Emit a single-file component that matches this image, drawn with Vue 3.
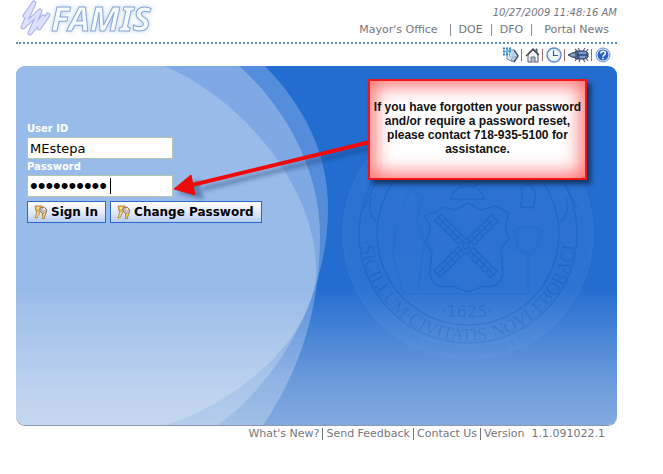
<script setup>
import { ref } from 'vue'

const userId = ref('MEstepa')
const password = ref('famis12345')
const siteLinks = ["Mayor's Office", 'DOE', 'DFO', 'Portal News']
const footerLinks = ["What's New?", 'Send Feedback', 'Contact Us']
const rim = 'M361 234a107 107 0 0 0 214 0'
const scribble = 'M9 16 18 3 7 27 24 11 14 33 27 17 23 28 32 15'
</script>

<template>
  <div class="page">
    <header class="top">
      <svg class="logo" viewBox="0 0 140 40" role="img" aria-label="FAMIS">
        <path class="scribble" :d="scribble" />
        <path class="scribble core" :d="scribble" />
        <text class="word" x="35" y="31">FAMIS</text>
      </svg>
      <div class="meta">
        <time class="clock">10/27/2009 11:48:16 AM</time>
        <nav class="links">
          <a v-for="l in siteLinks" :key="l" href="#">{{ l }}</a>
        </nav>
      </div>
    </header>

    <nav class="tools">
      <a href="#" aria-label="Notes">
        <svg width="16" height="16" viewBox="0 0 16 16">
          <path d="M4 3h7l4 6-4 6-7-3z" fill="#dceaf6" stroke="#6d8fb4" />
          <path d="M8 6h3M8 8h4M6 10h5" stroke="#9db8d6" />
          <path d="M11 3l4 6-4 6" fill="none" stroke="#3d5878" stroke-width="1.500" />
          <path d="M8 14l1-3 3-2 1 2-3 3z" fill="#c0d2e0" stroke="#7690aa" stroke-width=".8" />
          <path d="M0 1.500h8M0 4.500h8M0 7.500h7" stroke="#2a86c8" stroke-width="2" stroke-dasharray="2 1" />
          <path d="M2 4.500h4M4 3v3" stroke="#5cb4e6" stroke-width="1" />
        </svg>
      </a>
      <a href="#" aria-label="Home">
        <svg width="15" height="16" viewBox="0 0 15 16">
          <path d="M3 8v7h10V8L8 3z" fill="#f1f3f6" stroke="#565d66" />
          <path d="M11 4V2h1v4" fill="#a8b0ba" stroke="#4b525b" />
          <path d="M1 9l7-7 6 6" fill="none" stroke="#4a4f57" stroke-width="1.400" />
          <path d="M6 15v-5h4v5" fill="#aab7c9" stroke="#6b7585" />
        </svg>
      </a>
      <a href="#" aria-label="Time">
        <svg width="16" height="16" viewBox="0 0 16 16">
          <circle cx="8" cy="8" r="7" fill="#f6faff" stroke="#5f88c8" stroke-width="1.400" />
          <circle cx="8" cy="8" r="5.500" fill="none" stroke="#d5e3f7" />
          <path d="M7.500 3.500v5H12" fill="none" stroke="#315b9d" stroke-width="1.200" />
        </svg>
      </a>
      <a href="#" aria-label="Report a bug">
        <svg width="21" height="16" viewBox="0 0 21 16">
          <path d="M9 4 7 2M12 4l-2-3M15 4l2-3M18 5l2-3M9 11l-2 3M12 12l-1 3M15 12l2 3M18 11l2 3" stroke="#555f74" stroke-width="1.200" />
          <path d="M8 4h9l3 2v4l-3 2H8l-2-2V6z" fill="#5675ad" stroke="#33456a" />
          <path d="M10 4v8M9 8h11" stroke="#2c426e" />
          <path d="M11 6h7M12 10h5" stroke="#90abd9" stroke-width="1.500" />
          <path d="M8 5 4 6 0 8l4 2 4 1z" fill="#62809f" stroke="#3a4d66" />
          <path d="M3 8h4" stroke="#b7cbe0" />
        </svg>
      </a>
      <a href="#" aria-label="Help">
        <svg width="16" height="16" viewBox="0 0 16 16">
          <circle cx="8" cy="8" r="7" fill="#e3edfc" stroke="#6b91d3" />
          <circle cx="8" cy="8" r="5.500" fill="#2a62c4" />
          <path d="M5.800 6.500c0-3 4.600-3 4.600-.3C10.400 8 8 7.800 8 9.700M8 10.700v1.600" fill="none" stroke="#fff" stroke-width="1.600" />
        </svg>
      </a>
    </nav>

    <main class="panel">
      <svg class="backdrop" viewBox="16 66 601 359" preserveAspectRatio="none" aria-hidden="true">
        <defs>
          <linearGradient id="base" x1="0" y1="0" x2="0" y2="1">
            <stop offset="0" stop-color="#236dd1" />
            <stop offset=".62" stop-color="#236dd0" />
            <stop offset=".7" stop-color="#3b7cd4" />
            <stop offset=".88" stop-color="#6c9bdb" />
            <stop offset="1" stop-color="#82aadf" />
          </linearGradient>
          <path id="rim" :d="rim" />
        </defs>
        <path d="M16 66h601v359H16z" fill="url(#base)" />
        <g fill="#fff">
          <path d="M16 66H265C303 105 328 152 328 208C328 290 285 375 218 425H16z" opacity=".22" />
          <path d="M16 66H239C290 111 320 175 320 236C320 308 300 371 263 425H16z" opacity=".25" />
          <path d="M16 66H165C245 101 316 188 316 270C316 335 240 402 165 425H16z" opacity=".21" />
        </g>
        <g class="seal">
          <circle cx="468" cy="234" r="125" class="disc" />
          <circle cx="468" cy="234" r="117" class="beads" />
          <circle cx="468" cy="234" r="109" />
          <circle cx="468" cy="234" r="91" />
          <path d="M430 213q9 0 12-6l13 3 13-7 13 7 14-4 14 7q-6 16 0 25l-8 11 2 25q-5 16-19 12l-16 6-16-6q-21 4-22-14l2-20-7-10q10-15-1-25z" />
          <g v-for="a in [45, 135, 225, 315]" :key="a" :transform="`rotate(${a} 466 246)`">
            <path d="M462 206h9v34h-9zM466.500 206v34M462 213h9M462 220h9M462 227h9M462 234h9" />
          </g>
          <circle cx="466" cy="246" r="3" />
          <path d="M451 199q1-11 17-13 14 2 16 13zM458 186q10-10 19 0M520 207q4-9 1-20l9-3 6 9-3 15z" />
          <path class="faint" d="M515 230q14-7 26 0l-4 17-9 7-10-6zM528 254v38M402 205l9-16 11 9-5 23 7 19-6 52M396 222l-3 34 10 37M402 294h128" />
          <path d="M364 209q7-20 15-31M577 209q-8-20-17-31M378 222q-11-4-7-25M559 222q11-4 7-25" />
          <text class="legend"><textPath href="#rim" startOffset="50%">·SIGILLUM·CIVITATIS·NOVI·EBORACI·</textPath></text>
          <text class="year" x="467" y="317">·1625·</text>
        </g>
      </svg>

      <form class="login" @submit.prevent>
        <label for="user">User ID</label>
        <input id="user" v-model="userId" type="text" autocomplete="off" />
        <label for="pass">Password</label>
        <div class="secret">
          <input id="pass" v-model="password" type="password" autocomplete="off" />
          <span class="caret"></span>
        </div>
        <div class="actions">
          <button v-for="b in ['Sign In', 'Change Password']" :key="b" type="button">
            <svg width="15" height="16" viewBox="0 0 15 16" aria-hidden="true">
              <path d="M2 2h7l1 3-3 3-4-1z" fill="#e6b55b" stroke="#bd8a3c" />
              <path d="M4 7 2 14h2l3-6" fill="#f0d490" stroke="#b8924f" />
              <path d="M7 4l4-1 3 3-1 3-3 1-3-3z" fill="#c4bdb3" stroke="#8d7c70" />
              <path d="M11 9l-2 2 1 1-1 2 2 1 2-6" fill="#f4ce76" stroke="#a98449" />
              <path d="M4 4h2M10 5h2" stroke="#fff4d2" stroke-width="1.500" />
            </svg>
            {{ b }}
          </button>
        </div>
      </form>

      <svg class="arrow" width="200" height="64" viewBox="0 0 200 64" aria-hidden="true">
        <g class="shadow"><path d="M200 9 30 51" /><path class="head" d="M5 55 25 42 30 61z" /></g>
        <g class="ink"><path d="M197 4 15 48" /><path class="head" d="M1 51 18 37 22 57z" /></g>
      </svg>
      <aside class="callout">
        <p>If you have forgotten your password<br />and/or require a password reset,<br />please contact 718-935-5100 for<br />assistance.</p>
      </aside>
    </main>

    <footer class="foot">
      <a v-for="l in footerLinks" :key="l" href="#">{{ l }}</a>
      <span>Version&nbsp; 1.1.091022.1</span>
    </footer>
  </div>
</template>

<style>
body {
  margin: 0;
  background: #fff;
}
</style>

<style scoped>
.page {
  padding: 0 46px 0 16px;
  font-family: "DejaVu Sans", Verdana, sans-serif;
  font-size: 11px;
  color: #74767c;
}
a {
  color: inherit;
  text-decoration: none;
}
.top {
  display: flex;
  justify-content: space-between;
  height: 42px;
  border-bottom: 2px dotted #5c8cae;
}
.logo {
  width: 140px;
  height: 40px;
  overflow: visible;
}
.word {
  font: italic bold 34px "Noto Sans", sans-serif;
  fill: #f7fcff;
  stroke: #8ba8da;
  stroke-width: 1;
  filter: drop-shadow(0 0 2px #b9d0f2);
}
.scribble {
  fill: none;
  stroke: #a9aff0;
  stroke-width: 5;
  stroke-linecap: round;
  stroke-linejoin: round;
}
.scribble.core {
  stroke: #dde1fd;
  stroke-width: 3;
}
.meta {
  display: flex;
  flex-direction: column;
  align-items: flex-end;
  gap: 4px;
  padding-top: 6px;
}
.clock {
  font-size: 10px;
  font-style: italic;
  line-height: 14px;
}
.links {
  display: flex;
  padding-right: 8px;
  line-height: 12px;
}
.links a {
  padding: 0 8px;
  border-left: 1px solid #8d8f94;
}
.links a:first-child {
  padding-right: 12px;
  border-left: 0;
}
.links a:last-child {
  padding: 0 0 0 12px;
}
.tools {
  display: flex;
  justify-content: flex-end;
  align-items: center;
  height: 22px;
  padding-right: 4px;
}
.tools a {
  display: flex;
  align-items: center;
  height: 12px;
  padding: 0 2px 0 3px;
  border-left: 1px solid #966b6b;
}
.tools a:first-child {
  border-left: 0;
}
.panel {
  position: relative;
  box-sizing: border-box;
  min-height: 359px;
  padding: 55px 11px 0;
  border-radius: 9px;
  overflow: hidden;
  box-shadow: 0 1px 0 #8a97ad;
}
.backdrop {
  position: absolute;
  inset: 0;
  width: 100%;
  height: 100%;
}
.seal {
  fill: none;
  stroke: #1450a8;
  stroke-width: 1.5;
  opacity: .14;
}
.seal .disc {
  fill: #8cb6ee;
  fill-opacity: .6;
  stroke: #78a8e8;
}
.seal .beads {
  stroke: #5f97e0;
  stroke-width: 7;
  stroke-dasharray: 5 3;
}
.seal .faint {
  opacity: .5;
}
.seal text {
  fill: #1450a8;
  stroke: none;
  font-family: "Liberation Serif", serif;
  text-anchor: middle;
}
.legend {
  font-size: 18px;
}
.seal .year {
  font-family: "DejaVu Sans", sans-serif;
  font-size: 16px;
}
.login {
  position: relative;
  display: grid;
  justify-items: start;
}
.login label {
  color: #fff;
  font-size: 10px;
  font-weight: bold;
  line-height: 16px;
}
.login input {
  display: block;
  box-sizing: border-box;
  width: 146px;
  height: 22px;
  padding: 0 2px;
  border: 1px solid #b5c6ae;
  outline: 0;
  background: #fff;
  color: #000;
  font: 13px "DejaVu Sans", Verdana, sans-serif;
}
.secret {
  position: relative;
}
.login .secret input {
  font: 22px "Liberation Sans", Arial, sans-serif;
}
.caret {
  position: absolute;
  top: 3px;
  left: 83px;
  width: 1px;
  height: 16px;
  background: #000;
}
.actions {
  display: flex;
  gap: 4px;
  padding-top: 4px;
}
.actions button {
  display: flex;
  align-items: center;
  gap: 3px;
  height: 22px;
  padding: 0 7px 0 5px;
  border: 1px solid #2f69c8;
  background: linear-gradient(#fff, #dce6f8 60%, #b7cdf2);
  color: #000;
  font: bold 12px "DejaVu Sans", Verdana, sans-serif;
}
.arrow {
  position: absolute;
  top: 72px;
  left: 157px;
}
.arrow path {
  fill: none;
  stroke-width: 4;
}
.ink {
  stroke: #ee0b0b;
}
.shadow {
  stroke: #173a70;
  opacity: .45;
  filter: blur(2px);
}
.ink .head {
  fill: #ee0b0b;
  stroke-width: 1;
}
.shadow .head {
  fill: #173a70;
  stroke-width: 1;
}
.callout {
  position: absolute;
  top: 13px;
  left: 352px;
  box-sizing: border-box;
  width: 219px;
  height: 101px;
  padding: 19px 2px 0;
  border: 2px solid #ee1717;
  background: #fff;
  box-shadow: inset 0 0 18px 5px #ff7373, 4px 4px 5px #143564;
  color: #111;
  font: bold 12px/14px "Liberation Sans", Arial, sans-serif;
  text-align: center;
}
.callout p {
  margin: 0;
}
.foot {
  display: flex;
  justify-content: flex-end;
  padding: 3px 12px 0 0;
  line-height: 12px;
}
.foot a {
  padding-right: 3px;
  margin-right: 3px;
  border-right: 1px solid #74767c;
}
</style>
